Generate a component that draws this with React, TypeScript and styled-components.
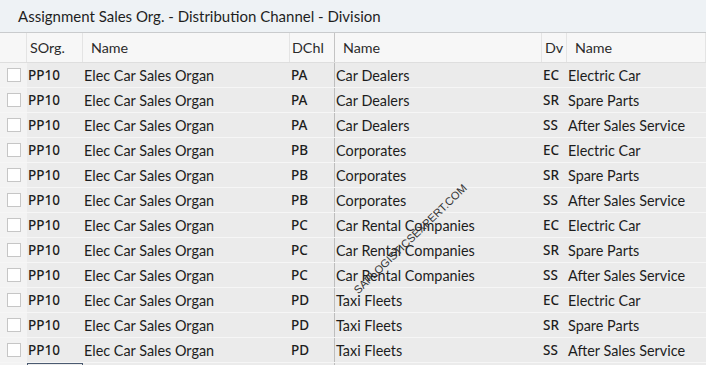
import styled, { createGlobalStyle } from 'styled-components';

const GlobalStyle = createGlobalStyle`
  html, body {
    margin: 0;
    padding: 0;
    background: #ebebeb;
    overflow: hidden;
  }
  * {
    box-sizing: border-box;
  }
`;

const COLS = '27px 56px 207px 45px 207px 25px 1fr';

const Page = styled.div`
  width: 706px;
  height: 365px;
  position: relative;
  overflow: hidden;
  font-family: Lato, 'Noto Sans', sans-serif;
  color: #1d1d1d;
  background: #ebebeb;
`;

const TitleBar = styled.div`
  height: 33px;
  padding: 0 0 1px 18px;
  display: flex;
  align-items: center;
  font-size: 15px;
  color: #1f1f1f;
  background: #eef2f5;
  border-bottom: 1px solid #c9cbcd;
`;

const HeaderRow = styled.div`
  display: grid;
  grid-template-columns: ${COLS};
  height: 30px;
  background: #f7f7f7;
  border-bottom: 1px solid #dedede;
`;

const HeadCell = styled.div<{ $pad: number; $strong?: boolean }>`
  display: flex;
  align-items: center;
  padding-left: ${(p) => p.$pad}px;
  font-size: 14.3px;
  color: #2b2b2b;
  border-right: 1px solid ${(p) => (p.$strong ? '#c4c4c4' : '#e4e4e4')};
  white-space: nowrap;
  overflow: hidden;
`;

const Row = styled.div`
  display: grid;
  grid-template-columns: ${COLS};
  height: 25px;
  border-bottom: 1px solid #f6f6f6;
`;

const SelectCell = styled.div`
  display: flex;
  align-items: center;
  padding-left: 7px;
  background: #f3f3f3;
`;

const Check = styled.div`
  width: 14px;
  height: 14px;
  background: #ffffff;
  border: 1px solid #c6c6c6;
`;

const Cell = styled.div<{ $code?: boolean; $strong?: boolean; $focus?: boolean }>`
  display: flex;
  align-items: center;
  padding-left: 1px;
  font-family: ${(p) => (p.$code ? "'Noto Sans', Lato, sans-serif" : "Lato, 'Noto Sans', sans-serif")};
  font-size: ${(p) => (p.$code ? '13.5px' : '14.4px')};
  font-weight: ${(p) => (p.$code ? 500 : 400)};
  color: #1d1d1d;
  white-space: nowrap;
  overflow: hidden;
  border-right: 1px solid ${(p) => (p.$strong ? '#bdbdbd' : 'transparent')};
  outline: ${(p) => (p.$focus ? '1px solid #4a5a70' : 'none')};
  outline-offset: -1px;
`;

const Watermark = styled.div`
  position: absolute;
  left: 333px;
  top: 230px;
  width: 160px;
  font-family: 'Liberation Sans', Arial, sans-serif;
  font-size: 11px;
  color: #333333;
  transform: rotate(-44deg);
  transform-origin: center;
  white-space: nowrap;
`;

const channels: Record<string, string> = {
  PA: 'Car Dealers',
  PB: 'Corporates',
  PC: 'Car Rental Companies',
  PD: 'Taxi Fleets',
};

const divisions: [string, string][] = [
  ['EC', 'Electric Car'],
  ['SR', 'Spare Parts'],
  ['SS', 'After Sales Service'],
];

const rows = Object.keys(channels).flatMap((ch) =>
  divisions.map(([dv, dvName]) => ({ ch, chName: channels[ch], dv, dvName }))
);

const App = () => (
  <Page>
    <GlobalStyle />
    <TitleBar>Assignment Sales Org. - Distribution Channel - Division</TitleBar>
    <HeaderRow>
      <HeadCell $pad={0} />
      <HeadCell $pad={3}>SOrg.</HeadCell>
      <HeadCell $pad={8}>Name</HeadCell>
      <HeadCell $pad={2} $strong>DChl</HeadCell>
      <HeadCell $pad={8}>Name</HeadCell>
      <HeadCell $pad={3}>Dv</HeadCell>
      <HeadCell $pad={8}>Name</HeadCell>
    </HeaderRow>
    {rows.map((r, i) => (
      <Row key={i}>
        <SelectCell>
          <Check />
        </SelectCell>
        <Cell $code>PP10</Cell>
        <Cell>Elec Car Sales Organ</Cell>
        <Cell $code $strong>{r.ch}</Cell>
        <Cell>{r.chName}</Cell>
        <Cell $code>{r.dv}</Cell>
        <Cell>{r.dvName}</Cell>
      </Row>
    ))}
    <Row>
      <SelectCell />
      <Cell $focus />
      <Cell />
      <Cell $strong />
      <Cell />
      <Cell />
      <Cell />
    </Row>
    <Watermark>SAPLOGISTICSEXPERT.COM</Watermark>
  </Page>
);

export default App;
